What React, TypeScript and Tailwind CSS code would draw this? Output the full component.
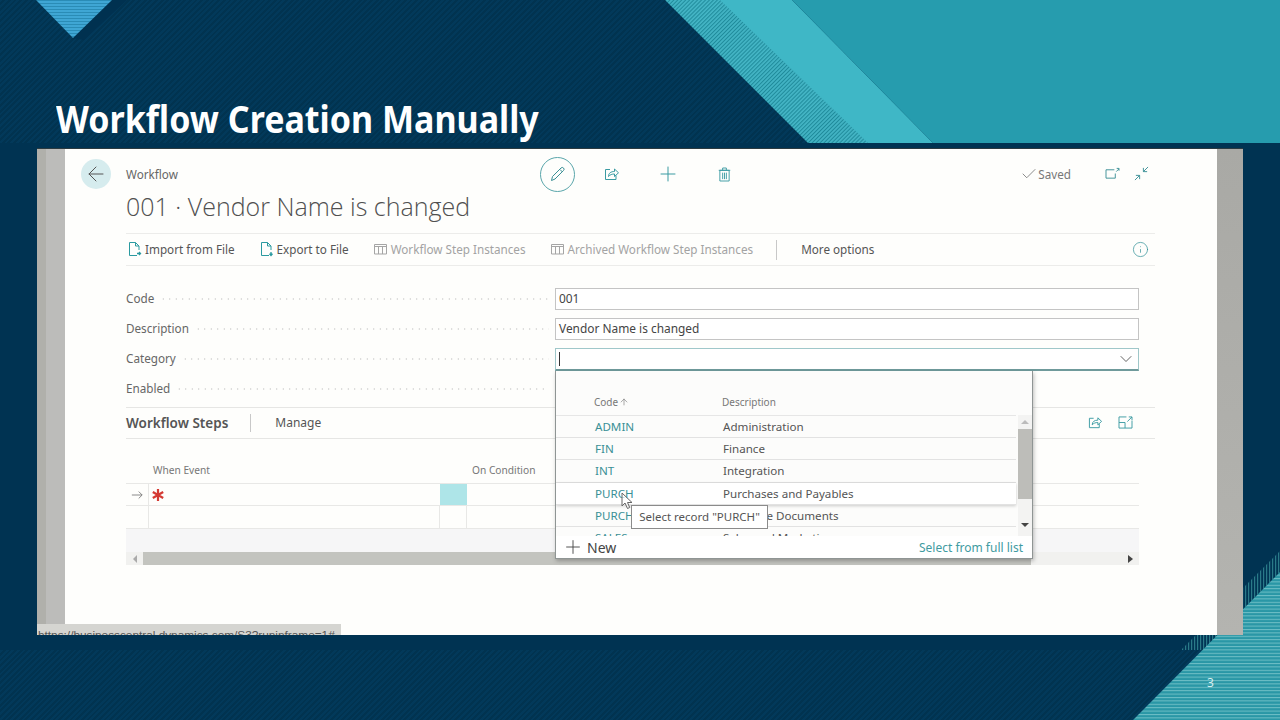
import { ArrowLeft, ArrowUp, ChevronDown, Info, Plus, Check } from "lucide-react";

const sans = "font-['Noto_Sans','Open_Sans',sans-serif]";

const categories = [
	{ code: "ADMIN", text: "Administration" },
	{ code: "FIN", text: "Finance" },
	{ code: "INT", text: "Integration" },
	{ code: "PURCH", text: "Purchases and Payables", hover: true },
	{ code: "PURCHDOC", text: "Purchase Documents" },
	{ code: "SALES", text: "Sales and Marketing" },
];

const fields = [
	{ label: "Code", value: "001" },
	{ label: "Description", value: "Vendor Name is changed" },
];

function ShareIcon({ className }: { className?: string }) {
	return (
		<svg viewBox="0 0 16 16" fill="none" stroke="currentColor" strokeWidth="1" className={className}>
			<path d="M6 3.500H1.500v10h10.500V9.500" />
			<path d="M4.500 10.500c0-3.500 2.500-5 6-5V3l4 3.800-4 3.700V8c-2.500 0-4.500.7-6 2.500z" />
		</svg>
	);
}

function FileIcon({ down }: { down?: boolean }) {
	return (
		<svg viewBox="0 0 14 16" fill="none" stroke="#2a9aa0" strokeWidth="1" className="h-4 w-[14px] shrink-0">
			<path d="M9 14.500H1.500v-13h6l3.500 3.500v4" />
			<path d="M7.500 1.500V5H11" />
			{down ? <path d="M11 11v3M9.500 12.800l1.500 1.700 1.500-1.700" strokeWidth="1.300" /> : <path d="M9 12.500h3.500M11 11l1.500 1.500L11 14" strokeWidth="1.300" />}
		</svg>
	);
}

function ColumnsIcon() {
	return (
		<svg viewBox="0 0 13 12" fill="none" stroke="#a5a5a5" strokeWidth="1" className="h-3 w-[13px] shrink-0">
			<path d="M.5 1.500h12v9.500H.5zM.5 3.500h12M4.500 3.500V11M8.500 3.500V11" />
		</svg>
	);
}

function ActionItem({ icon, label, muted, className }: { icon: React.ReactNode; label: string; muted?: boolean; className: string }) {
	return (
		<div className={`flex items-center ${muted ? "gap-[4px] text-[#a3a3a3]" : "gap-[3px] text-[#555]"} ${className}`}>
			{icon}
			<span>{label}</span>
		</div>
	);
}

function Leader() {
	return <div className="mx-[6px] h-[4px] flex-1 bg-[radial-gradient(circle,#d2d2d2_0.8px,transparent_1px)] bg-[length:6.500px_4px]" />;
}

function Backdrop() {
	return (
		<svg viewBox="0 0 1280 720" className="absolute inset-0 z-0 h-[720px] w-[1280px]">
			<defs>
				<pattern id="teal" width="4" height="3.400" patternUnits="userSpaceOnUse">
					<rect width="4" height="3.400" fill="#2a97a6" />
					<rect width="4" height="1" fill="#6fbfc6" />
				</pattern>
				<pattern id="blue" width="4" height="3" patternUnits="userSpaceOnUse">
					<rect width="4" height="3" fill="#3fa6d4" />
					<rect width="4" height="1" fill="#2a8cb6" />
				</pattern>
				<pattern id="thin" width="2.800" height="2.800" patternTransform="rotate(45)" patternUnits="userSpaceOnUse">
					<rect width="2.800" height="2.800" fill="#43b4c4" />
					<rect width="1" height="2.800" fill="#1f8b9b" />
				</pattern>
				<pattern id="dark" width="3" height="4" patternUnits="userSpaceOnUse">
					<rect width="3" height="4" fill="#003554" />
					<rect width="1.200" height="4" fill="#2a7a88" />
				</pattern>
			</defs>
			<path d="M112 0H127L84 40 73 38z" fill="#003150" />
			<path d="M36 0H112L73 38z" fill="url(#blue)" />
			<path d="M665 0H730L871 143H808z" fill="url(#thin)" />
			<path d="M720 0H792L933 143H868z" fill="#3fb7c6" />
			<path d="M792 0H1280V143H933z" fill="#269cae" />
			<path d="M1280 551L1181 650H1203L1280 572z" fill="url(#dark)" />
			<path d="M1280 572L1133 720H1280z" fill="url(#teal)" />
		</svg>
	);
}

function CategoryPopup() {
	return (
		<div className="absolute left-[490px] top-[222px] z-20 flex h-[188px] w-[478px] flex-col border border-t-0 border-[#8f9594] bg-[#fcfcfb] text-[11.600px] shadow-[1px_2px_4px_rgba(0,0,0,0.25)]">
			<div className="flex h-[44px] items-end pb-[5px] text-[10px] text-[#777]">
				<span className="ml-[38px] flex w-[128px] items-center gap-[1px]">
					Code <ArrowUp size={10} strokeWidth={1.500} />
				</span>
				<span>Description</span>
			</div>
			<div className="flex h-[123px] overflow-hidden">
				<div className="w-[460px] border-t border-[#e6e6e6]">
					{categories.map((c) => (
						<div
							key={c.code}
							className={`flex h-[22.400px] shrink-0 items-center border-b border-[#e2e2e2] ${c.hover ? "bg-white shadow-[0_1px_3px_rgba(0,0,0,0.2)]" : ""}`}
						>
							<span className="ml-[39px] w-[128px] text-[#3a9096]">{c.code}</span>
							<span className="text-[#555]">{c.text}</span>
						</div>
					))}
				</div>
				<div className="ml-[2px] flex w-[14px] flex-col items-center bg-[#f3f3f2]">
					<span className="mt-[5px] h-0 w-0 border-x-[4px] border-b-[4px] border-x-transparent border-b-[#bbb]" />
					<span className="mt-[5px] h-[70px] w-full bg-[#bdbdb9]" />
					<span className="mt-[24px] h-0 w-0 border-x-[4px] border-t-[4px] border-x-transparent border-t-[#444]" />
				</div>
			</div>
			<div className="flex flex-1 items-center justify-between bg-white pl-[6px] pr-[9px]">
				<div className="flex items-center gap-[1px] text-[14px] text-[#444]">
					<Plus size={22} strokeWidth={1} />
					<span className="ml-[2px]">New</span>
				</div>
				<span className="pt-[2px] text-[12px] text-[#3f9ba1]">Select from full list</span>
			</div>
		</div>
	);
}

export default function App() {
	return (
		<div className={`relative h-[720px] w-[1280px] overflow-hidden bg-[repeating-linear-gradient(135deg,#02395a_0px,#02395a_2px,#013350_2px,#013350_4px)] ${sans}`}>
			<div className="h-[143px]" />
			<div className="h-[507px] bg-[#003352] pt-[6px]" />
			<Backdrop />

			<h1 className="absolute left-[56px] top-[95px] z-10 origin-left scale-x-[0.895] whitespace-nowrap text-[38px] font-bold leading-[46px] text-white">
				Workflow Creation Manually
			</h1>

			{/* captured browser frame */}
			<div className="absolute left-[37px] top-[148px] z-10 flex h-[487px] w-[1206px] border-t border-[#2b3a40]">
				<div className="flex w-[28px] shrink-0">
					<div className="w-[9px] bg-[#b0b0ab]" />
					<div className="flex-1 bg-[#bcbcba]" />
				</div>

				<div className="relative flex flex-1 bg-[#fefefc] text-[11.700px]">
					<div className="w-[61px] shrink-0 pl-[16px] pt-[10px]">
						<div className="flex h-[30px] w-[30px] items-center justify-center rounded-full bg-[#d6ecee] text-[#555]">
							<ArrowLeft size={24} strokeWidth={1} />
						</div>
					</div>

					<div className="w-[1029px] shrink-0">
						<div className="mt-[3px] flex h-[44px] items-center text-[#666]">
							<span className="w-[414px] pt-[2px]">Workflow</span>
							<div className="flex h-[35px] w-[35px] items-center justify-center rounded-full border border-[#5aa6ab]">
								<svg viewBox="0 0 16 16" fill="none" stroke="#3a8f95" strokeWidth="1" className="h-4 w-4">
									<path d="M1.500 14.500l1-4L11 2a1.500 1.500 0 0 1 2.500 2.500L5 13zM10 3.500L12.500 6" />
								</svg>
							</div>
							<div className="ml-[21px] flex w-8 justify-center text-[#3a9ba2]">
								<ShareIcon className="h-4 w-4" />
							</div>
							<div className="ml-[24px] flex w-8 justify-center text-[#3a9ba2]">
								<Plus size={24} strokeWidth={1} />
							</div>
							<div className="ml-[24px] flex w-8 justify-center">
								<svg viewBox="0 0 14 16" fill="none" stroke="#3a9ba2" strokeWidth="1" className="h-[15px] w-[13px]">
									<path d="M2 3.500h10v11.500H2zM.8 3.500h12.400M5 3.500V1h4v2.500M5 6v7M7 6v7M9 6v7" />
								</svg>
							</div>
							<div className="ml-auto flex items-center pr-[6px]">
								<Check size={18} strokeWidth={1} className="text-[#666]" />
								<span className="pt-[2px] text-[#777]">Saved</span>
								<svg viewBox="0 0 16 14" fill="none" stroke="#3a8f95" strokeWidth="1" className="ml-[34px] h-[13px] w-[15px]">
									<path d="M10 3H1v9h10V7M12 5l3-3M12.500 1.500H15V4" />
								</svg>
								<svg viewBox="0 0 16 16" fill="none" stroke="#3a8f95" strokeWidth="1" className="ml-[14px] h-[15px] w-[15px]">
									<path d="M15 1l-5 5M10 2v4h4M1 15l5-5M2 10h4v4" />
								</svg>
							</div>
						</div>

						<div className="mb-[15px] flex h-[22px] items-center font-['Open_Sans',sans-serif] text-[25px] font-light text-[#505050]">
							001 · Vendor Name is changed
						</div>

						<div className="relative flex h-[33px] items-center border-y border-[#ececea]">
							<ActionItem className="ml-[2px]" icon={<FileIcon />} label="Import from File" />
							<ActionItem className="ml-[25px]" icon={<FileIcon down />} label="Export to File" />
							<ActionItem className="ml-[25px]" muted icon={<ColumnsIcon />} label="Workflow Step Instances" />
							<ActionItem className="ml-[25px]" muted icon={<ColumnsIcon />} label="Archived Workflow Step Instances" />
							<div className="ml-[23px] h-[20px] w-px bg-[#c8c8c8]" />
							<span className="ml-[24px] text-[#555]">More options</span>
							<Info size={17} strokeWidth={1} className="ml-auto mr-[6px] text-[#2f8f96]" />
						</div>

						<div className="mt-[18px] w-[1013px]">
							{fields.map((f) => (
								<div key={f.label} className="flex h-[30px] items-center text-[#666]">
									<span>{f.label}</span>
									<Leader />
									<div className="flex h-[22px] w-[584px] items-center border border-[#c4c4c4] bg-white pl-[3px] text-[11.900px] text-[#444]">
										{f.value}
									</div>
								</div>
							))}
							<div className="flex h-[30px] items-center text-[#666]">
								<span>Category</span>
								<Leader />
								<div className="flex h-[23px] w-[584px] items-center justify-between border border-b-2 border-[#9fc7c9] border-b-[#6f9a9b] bg-white pl-[3px] pr-[2px]">
									<span className="h-[14px] w-px bg-[#333]" />
									<ChevronDown size={20} strokeWidth={1} className="text-[#444]" />
								</div>
							</div>
							<div className="flex h-[30px] items-center text-[#666]">
								<span>Enabled</span>
								<Leader />
								<div className="w-[584px]" />
							</div>
						</div>

						<div className="mt-[3px] flex h-[32px] items-center border-y border-[#e6e6e4]">
							<span className="text-[13.500px] font-semibold text-[#555]">Workflow Steps</span>
							<div className="ml-[22px] h-[18px] w-px bg-[#c8c8c8]" />
							<span className="ml-[24px] text-[12px] text-[#555]">Manage</span>
							<div className="ml-auto flex items-center gap-[15px] pb-[2px] pr-[22px] text-[#3a9ba2]">
								<ShareIcon className="h-[15px] w-[15px]" />
								<svg viewBox="0 0 16 14" fill="none" stroke="currentColor" strokeWidth="1" className="h-[13px] w-[15px]">
									<path d="M9 1H1v12h14V5M1 7h6.500v6M10 6l5-5M11.500 1H15v3.500" />
								</svg>
							</div>
						</div>

						<div className="w-[1013px]">
							<div className="flex h-[45px] items-end border-b border-[#e8e8e6] pb-[5px] text-[10.200px] text-[#777]">
								<span className="ml-[27px] w-[319px]">When Event</span>
								<span>On Condition</span>
							</div>
							<div className="grid h-[22px] grid-cols-[23px_291px_27px_1fr] border-b border-[#e8e8e6]">
								<div className="flex items-center justify-center border-r border-[#e8e8e6] text-[#777]">
									<svg viewBox="0 0 14 10" fill="none" stroke="currentColor" strokeWidth="1" className="h-[10px] w-3">
										<path d="M1 5h12M9 1l4 4-4 4" />
									</svg>
								</div>
								<div className="flex items-center pl-[3px] text-[#d43a33]">
									<svg viewBox="0 0 12 12" stroke="currentColor" strokeWidth="2.200" className="h-3 w-3">
										<path d="M6 0v12M.8 3l10.400 6M11.200 3L.8 9" />
									</svg>
								</div>
								<div className="bg-[#aee5e8]" />
								<div />
							</div>
							<div className="grid h-[23px] grid-cols-[23px_291px_27px_1fr] border-b border-[#e8e8e6]">
								<div className="border-r border-[#e8e8e6]" />
								<div className="border-r border-[#e8e8e6]" />
								<div className="border-r border-[#e8e8e6]" />
								<div />
							</div>
							<div className="h-[23px] bg-[#f6f6f7]" />
							<div className="flex h-[13px] items-center bg-[#f1f1ef]">
								<div className="flex w-[17px] justify-center">
									<span className="h-0 w-0 border-y-[4px] border-r-[4px] border-y-transparent border-r-[#aaa]" />
								</div>
								<div className="h-full w-[888px] bg-[#c3c4bf]" />
								<span className="ml-auto mr-[6px] h-0 w-0 border-y-[4px] border-l-[5px] border-y-transparent border-l-[#444]" />
							</div>
						</div>
					</div>

					<CategoryPopup />

					{/* tooltip over the list */}
					<div className="absolute left-[566px] top-[356px] z-30 flex h-[24px] w-[137px] items-center justify-center border border-[#8b8b8b] bg-white text-[11.500px] text-[#555]">
						Select record "PURCH"
					</div>
					<svg viewBox="0 0 13 18" className="absolute left-[556px] top-[343px] z-40 h-[18px] w-[13px]">
						<path d="M1 1v13l3-3 2.500 5.500 2.200-1L6.500 10.500H11z" fill="#fff" fillOpacity="0.7" stroke="#666" strokeWidth="1" />
					</svg>
				</div>

				<div className="w-[26px] shrink-0 bg-[linear-gradient(180deg,#a9a9a5,#b4b4b0)]" />

				{/* status bar of the browser, cut off by the capture */}
				<div className="absolute bottom-0 left-0 z-30 h-[11px] w-[304px] overflow-hidden bg-[#d5d5d1] pl-px font-['Liberation_Sans',sans-serif] text-[11.800px] leading-[22px] text-[#555]">
					https://businesscentral.dynamics.com/S3?runinframe=1#
				</div>
			</div>

			<span className="absolute left-[1207px] top-[674px] z-10 text-[12px] text-[#d8eef0]">3</span>
		</div>
	);
}
